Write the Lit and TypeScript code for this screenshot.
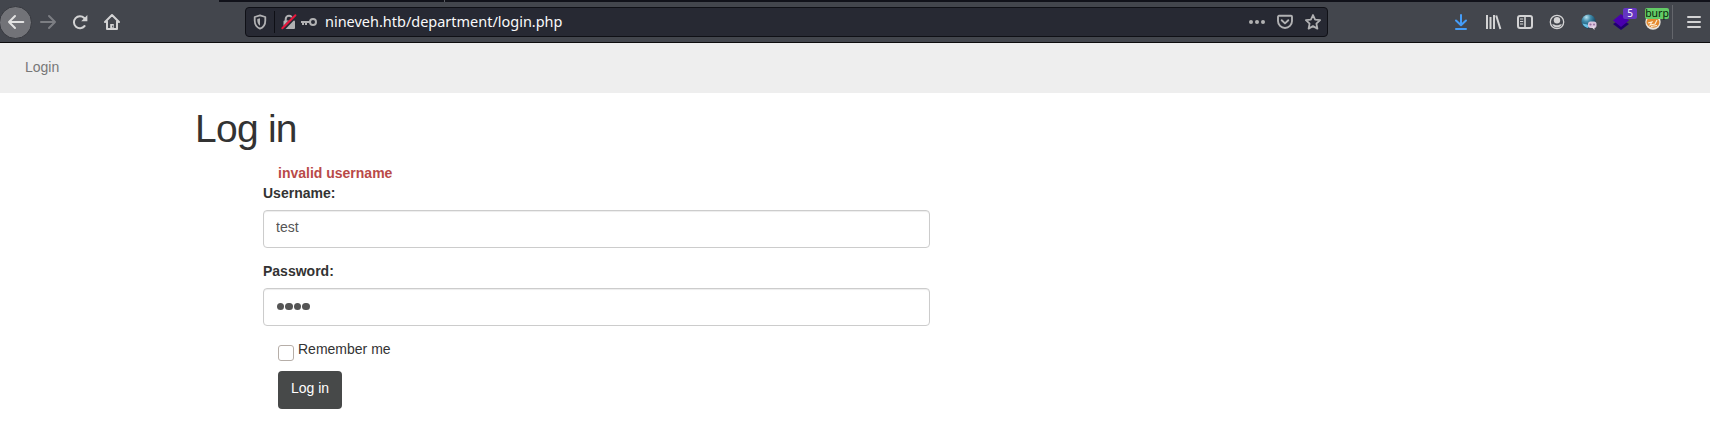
import { LitElement, html, css } from "lit";
import { customElement } from "lit/decorators.js";

@customElement("browser-toolbar")
class BrowserToolbar extends LitElement {
  static styles = css`
    :host { display: block; }
    .tabs { height: 2px; box-sizing: border-box; background: #11121a; margin-left: 219px; padding-left: 225px; }
    .tab-edge { width: 1px; height: 2px; background: #5b5d63; }
    .frame { height: 43px; box-sizing: border-box; border-bottom: 1px solid #0c0c0d; background: #43464d; }
    .bar { height: 40px; display: flex; align-items: center; }
    .nav { width: 245px; flex: none; display: flex; align-items: center; }
    .back { width: 33px; height: 33px; box-sizing: border-box; border: 1px solid #37393f; border-radius: 50%; background: #727378; margin-left: -1px; display: grid; place-items: center; }
    .nav > svg { margin-left: 16px; }
    .nav > .back + svg { margin-left: 8px; }
    svg { display: block; flex: none; overflow: visible; }
    .url { width: 1083px; height: 30px; flex: none; box-sizing: border-box; border: 1px solid #0f1016; border-radius: 4px; background: #272933; display: flex; align-items: center; color: #b1b1b3; }
    .shield { margin-left: 6px; }
    .sep { width: 1px; height: 22px; background: #0e0f15; margin: 0 6px 0 6px; }
    .key { margin-left: 4px; }
    .address { font: 14.47px/20px "Noto Sans", sans-serif; color: #f9f9fa; margin-left: 8px; flex: 1; white-space: nowrap; }
    .actions { display: flex; gap: 12px; margin-right: 6px; }
    .tools { flex: 1; height: 40px; display: flex; align-items: center; justify-content: flex-end; gap: 16px; color: #d3d3d4; }
    .ext { position: relative; width: 16px; height: 16px; }
    .badge { position: absolute; height: 11px; border-radius: 2px; font: 10px/11px "Noto Sans", sans-serif; text-align: center; }
    .count { left: 10px; top: -6px; width: 14px; background: #6435c1; color: #fff; }
    .burp { left: 0; top: -6px; width: 24px; background: #63cb66; color: #07240a; font-size: 10.5px; line-height: 10px; }
    .menu { display: flex; align-items: center; height: 34px; border-left: 1px solid #64666c; padding: 0 9px 0 14px; margin-left: -5px; }
  `;
  render() {
    return html`
      <div class="frame">
        <div class="tabs"><div class="tab-edge"></div></div>
        <div class="bar">
          <div class="nav">
            <div class="back">
              <svg width="18" height="16" viewBox="0 0 18 16" fill="none" stroke="#e2e2e2" stroke-width="2" stroke-linecap="round" stroke-linejoin="round"><path d="M16.3 8H2M8 2L2 8l6 6"/></svg>
            </div>
            <svg width="16" height="16" viewBox="0 0 16 16" fill="none" stroke="#7c7e83" stroke-width="2" stroke-linecap="round" stroke-linejoin="round"><path d="M1 8h14M9 2l6 6-6 6"/></svg>
            <svg width="16" height="16" viewBox="0 0 16 16" fill="none" stroke="#d3d3d4" stroke-width="2" stroke-linecap="round"><path d="M12.6 12A6 6 0 1 1 12.2 4"/><path d="M15.4 1v6.2H9.2z" fill="#d3d3d4" stroke="none"/></svg>
            <svg width="16" height="16" viewBox="0 0 16 16" fill="none" stroke="#d3d3d4" stroke-width="2" stroke-linecap="round" stroke-linejoin="round"><path d="M1 8l7-7 7 7M3 7.5V15h10V7.5"/><path d="M8 14v-4" stroke-width="3.6" stroke-linecap="butt"/><path d="M8.7 12v1" stroke="#43464d" stroke-width="1"/></svg>
          </div>
          <div class="url">
            <svg class="shield" width="16" height="16" viewBox="0 0 16 16" fill="none" stroke="currentColor" stroke-width="1.8" stroke-linejoin="round"><path d="M8 1.4L13.3 3v3.4c0 4-2 7-5.3 8.2C4.7 13.4 2.7 10.4 2.7 6.4V3z"/><path d="M8 4.300v7.400C6.200 10.600 5.300 8.600 5.300 6.200V5z" fill="currentColor" stroke="none"/></svg>
            <div class="sep"></div>
            <svg width="16" height="16" viewBox="0 0 16 16"><path d="M4.700 7V5a3.300 3.300 0 0 1 6.600 0v2" fill="none" stroke="#b1b1b3" stroke-width="2"/><rect x="2.500" y="6.500" width="11.500" height="8.500" rx="1" fill="#b1b1b3"/><path d="M2 15L15 1.500" stroke="#272933" stroke-width="3.800"/><path d="M1.300 14.300L14.400 1.200" stroke="#e9173d" stroke-width="2" stroke-linecap="round"/></svg>
            <svg class="key" width="16" height="16" viewBox="0 0 16 16" fill="none" stroke="currentColor" stroke-width="2"><circle cx="12" cy="8" r="3"/><path d="M9 8H0M2 8v3M5 8v3"/></svg>
            <span class="address">nineveh.htb/department/login.php</span>
            <div class="actions">
              <svg width="16" height="16" viewBox="0 0 16 16" fill="currentColor"><circle cx="2" cy="8" r="2"/><circle cx="8" cy="8" r="2"/><circle cx="14" cy="8" r="2"/></svg>
              <svg width="16" height="16" viewBox="0 0 16 16" fill="none" stroke="currentColor" stroke-width="1.900" stroke-linecap="round" stroke-linejoin="round"><path d="M2 1.800h12a1 1 0 0 1 1 1V7a7 7 0 0 1-14 0V2.800a1 1 0 0 1 1-1z"/><path d="M4.700 6.200L8 9.400l3.300-3.200"/></svg>
              <svg width="16" height="16" viewBox="0 0 16 16" fill="none" stroke="currentColor" stroke-width="1.800" stroke-linejoin="round"><path d="M8 1l2.100 4.600 5 .6-3.700 3.400 1 5L8 12.100l-4.400 2.500 1-5L.9 6.200l5-.6z"/></svg>
            </div>
          </div>
          <div class="tools">
            <svg width="16" height="16" viewBox="0 0 16 16" fill="none" stroke="#459df8" stroke-width="2" stroke-linecap="round" stroke-linejoin="round"><path d="M8 1v10M3 6.500L8 11.300l5-4.800M3 15h10"/></svg>
            <svg width="16" height="16" viewBox="0 0 16 16" stroke="currentColor" stroke-width="2"><path d="M2 1v14M5.500 3v12M9 1v14M11.200 1.500L15.400 15"/></svg>
            <svg width="16" height="16" viewBox="0 0 16 16" fill="none" stroke="currentColor"><rect x="1" y="2" width="14" height="12" rx="2" stroke-width="2"/><path d="M8 2v12" stroke-width="1.600"/><path d="M3 5h3.200M3 7.500h3.200M3 10h3.200" stroke-width="1.200"/></svg>
            <svg width="16" height="16" viewBox="0 0 16 16"><circle cx="8" cy="8" r="6.700" fill="none" stroke="currentColor" stroke-width="1.300"/><circle cx="8" cy="6.300" r="3.200" fill="currentColor"/><path d="M3.200 10.500c1.500-.9 2.300.8 4.800.8s3.300-1.700 4.800-.8C11.700 12.400 10 13.500 8 13.500s-3.700-1.100-4.800-3z" fill="currentColor"/></svg>
            <svg width="16" height="16" viewBox="0 0 16 16">
              <defs><radialGradient id="globe" cx=".35" cy=".2" r=".75"><stop offset="0" stop-color="#b9e4f2"/><stop offset=".4" stop-color="#438dac"/><stop offset="1" stop-color="#0b3d59"/></radialGradient></defs>
              <circle cx="7.500" cy="7.500" r="7" fill="url(#globe)"/><path d="M1.500 9.500c3 1.200 5 .3 6.500 2l-1 2.500C4.500 13.800 2.300 12 1.500 9.500z" fill="#6bc0e4"/><rect x="7" y="7.500" width="8.500" height="6.500" rx="2.500" fill="#d9c4dd"/><path d="M10.500 13l3 3v-4z" fill="#e8dcea"/><circle cx="9.500" cy="10.500" r="1.100" fill="#956e9f"/><circle cx="13" cy="10.500" r="1" fill="#956e9f"/></svg>
            <div class="ext">
              <svg width="16" height="16" viewBox="0 0 16 16"><path d="M0 10l8 6 8-6-8-5z" fill="#21006f"/><path d="M0 6.500L8 0l8 6.500L8 13z" fill="#4900ae"/></svg>
              <span class="badge count">5</span>
            </div>
            <div class="ext">
              <svg width="16" height="16" viewBox="0 0 16 16"><circle cx="8" cy="8" r="7.700" fill="#e7e2da"/><path d="M1.500 8C2 4 5 3 8 3s6 2 6.300 5-2.600 5.700-5.800 5.700S1.500 11.500 1.500 8z" fill="#e58a2f"/><path d="M3 9l4-1-2 3 5-1 2-4M6 12.500l6-1" fill="none" stroke="#fff0d8" stroke-width="1.100"/></svg>
              <span class="badge burp">burp</span>
            </div>
            <div class="menu"><svg width="14" height="14" viewBox="0 0 14 14" stroke="currentColor" stroke-width="2"><path d="M1 2h12M1 7h12M1 12h12" stroke-linecap="round"/></svg></div>
          </div>
        </div>
      </div>`;
  }
}

@customElement("app-root")
class AppRoot extends LitElement {
  static styles = css`
    :host { display: block; height: 440px; overflow: hidden; background: #fff; color: #333; font: 14px/20px "Liberation Sans", Arial, sans-serif; }
    .navbar { height: 50px; background: #eee; color: #777; padding: 14px 25px; box-sizing: border-box; }
    main { padding: 14px 0 0 195px; }
    h1 { margin: 0; font-weight: 400; font-size: 39px; line-height: 43px; letter-spacing: -.75px; }
    form { width: 667px; margin: 13px 0 0 68px; }
    .error { margin-left: 15px; color: #b94a48; font-weight: 700; }
    label { display: block; font-weight: 700; }
    .field { display: block; width: 667px; height: 38px; box-sizing: border-box; margin: 7px 0 13px; padding: 7px 12px 11px; border: 1px solid #ccc; border-radius: 4px; background: #fff; box-shadow: inset 0 1px 1px rgba(0,0,0,.075); color: #555; font: inherit; outline: 0; }
    .dots { display: flex; gap: 1px; align-items: center; padding: 0 12.5px 1.5px; }
    .dot { width: 7.5px; height: 7.5px; border-radius: 50%; background: #555; }
    .remember { display: flex; align-items: flex-start; gap: 4px; margin: 0 0 0 15px; font-weight: 400; }
    .box { width: 16px; height: 16px; box-sizing: border-box; border: 1px solid #b6aea8; border-radius: 3px; background: #fff; margin-top: 6px; }
    button { display: block; margin: 10px 0 0 15px; width: 64px; height: 38px; padding: 0 0 4px; border: 0; border-radius: 4px; background: #474949; color: #fff; font: inherit; }
  `;
  render() {
    return html`
      <browser-toolbar></browser-toolbar>
      <nav class="navbar">Login</nav>
      <main>
        <h1>Log in</h1>
        <form>
          <div class="error">invalid username</div>
          <label for="username">Username:</label>
          <input class="field" id="username" value="test">
          <label>Password:</label>
          <div class="field dots">${[0, 1, 2, 3].map(() => html`<span class="dot"></span>`)}</div>
          <label class="remember"><span class="box"></span>Remember me</label>
          <button type="button">Log in</button>
        </form>
      </main>`;
  }
}
